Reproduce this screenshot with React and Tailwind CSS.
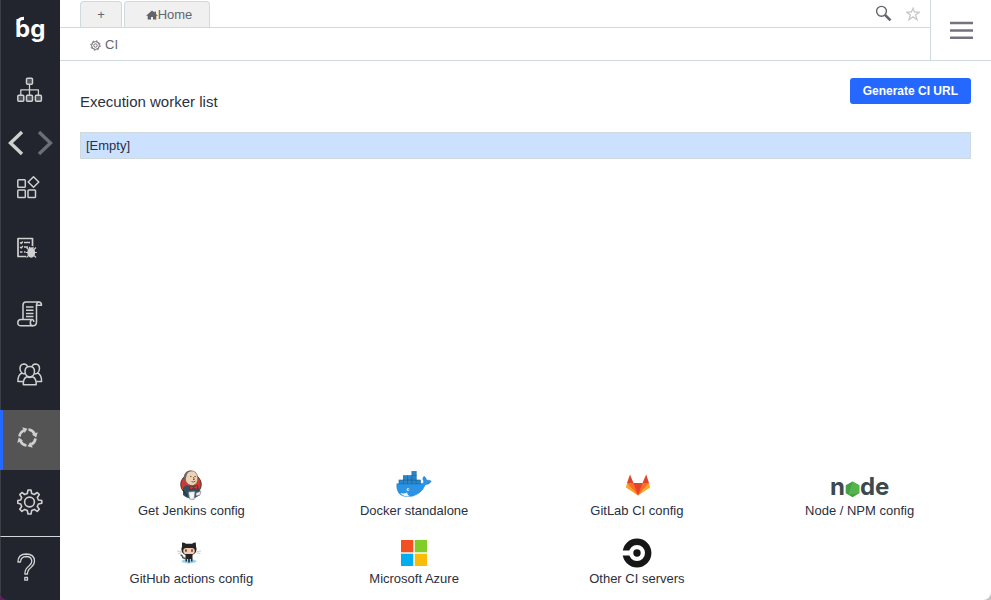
import React from "react";

const stroke = { fill: "none", stroke: "#d0d0d0", strokeWidth: 1.5, strokeLinejoin: "round" };

function Logo() {
  return (
    <span className="relative block text-[24px] leading-9 font-bold text-white font-['Inter',sans-serif]">
      bg
      <svg className="absolute top-1 left-0" width="10" height="10" viewBox="0 0 10 10" aria-hidden="true">
        <path d="M3.200 9.500Q2.500 3.500 9 3.300" fill="none" stroke="#fff" strokeWidth="3.200" />
      </svg>
    </span>
  );
}

function TreeIcon() {
  return (
    <svg width="26" height="26" viewBox="0 0 26 26" {...stroke}>
      <g fill="#50535a">
        <rect x="9.500" y="1.200" width="6" height="6" rx="1" />
        <rect x="0.800" y="18.200" width="6" height="6" rx="1" />
        <rect x="9.500" y="18.200" width="6" height="6" rx="1" />
        <rect x="18.400" y="18.200" width="6" height="6" rx="1" />
      </g>
      <path d="M12.500 7.200V18M3.800 18V12.800H21.400V18" strokeWidth="1.300" />
    </svg>
  );
}

function BlocksIcon() {
  return (
    <svg width="24" height="24" viewBox="0 0 24 24" {...stroke}>
      <rect x="0.800" y="3.700" width="7.500" height="7.500" rx="0.800" />
      <rect x="0.800" y="14" width="7.500" height="7.500" rx="0.800" />
      <rect x="11" y="14" width="7.500" height="7.500" rx="0.800" />
      <path d="M16.500 0.800L21.800 6L16.500 11.200L11.200 6Z" />
    </svg>
  );
}

function BugListIcon() {
  return (
    <svg width="22" height="22" viewBox="0 0 22 22" {...stroke}>
      <path d="M9 19.500H1V1.500H15.500V9" strokeWidth="1.700" />
      <path d="M3 5.500L4.200 6.500L5.800 4.500M3 10L4.200 11L5.800 9M3 15H5.500M7 5.500H13M7 10H11M7 15H8.500" strokeWidth="1.300" />
      <ellipse cx="14.200" cy="15.500" rx="3.200" ry="4.500" fill="#d0d0d0" />
      <path d="M9.500 10.500L11.500 12.500M19 10.500L17 12.500M8.800 15.500H19.800M9.500 20.500L11.500 18.500M19 20.500L17 18.500M12 9.800L13 11M16.500 9.800L15.500 11" strokeWidth="1.100" />
    </svg>
  );
}

function ScrollIcon() {
  return (
    <svg width="26" height="26" viewBox="0 0 26 26" {...stroke}>
      <path d="M6 18.500V4Q6 0.900 9 0.900H21.800Q24.500 0.900 24.500 4.300H19.500V21Q19.500 24.800 15.800 24.800H4Q0.800 24.800 0.800 21.700Q0.800 18.500 4 18.500H14.800" />
      <path d="M21.800 0.900Q19.500 1.200 19.500 4.300M16 18.500Q13.300 18.500 13.300 21.700Q13.300 24.800 16 24.800M15.500 18.500Q17 19 16.800 21" />
      <path d="M9 6H16.500M9 9.200H16.500M9 12.400H16.500M9 15.600H16.500" />
    </svg>
  );
}

function UsersIcon() {
  return (
    <svg width="26" height="24" viewBox="0 0 26 24" {...stroke}>
      <path d="M8 8.500Q8 3.500 12.700 3.500Q17.500 3.500 17.500 8.500Q17.200 13.500 12.700 14Q8.300 13.500 8 8.500Z" />
      <path d="M6.300 21.800Q6 15 10 13.700Q12.700 15.300 15.500 13.700Q19.500 15 19.200 21.800Z" />
      <path d="M10.500 3.500Q9.500 1 7 1Q3 1.300 3 5.500Q3 8.500 5 10Q0.900 11.500 0.900 18.500H6M15 3.500Q16 1 18.500 1Q22.500 1.300 22.500 5.500Q22.500 8.500 20.500 10Q24.600 11.500 24.600 18.500H19.500M5 10Q6.500 11.300 8.300 10.500M20.500 10Q19 11.300 17.200 10.500" />
    </svg>
  );
}

function SyncIcon() {
  return (
    <svg width="22" height="22" viewBox="0 0 22 22" fill="none" stroke="#d0d0d0" strokeWidth="2.600">
      {[0, 90, 180, 270].map((angle) => (
        <g key={angle} transform={`rotate(${angle} 10.500 10.500)`}>
          <path d="M2.500 9.500A8 8 0 0 1 6.800 3.400" />
          <path d="M5.300 0.300L10.500 1.800L7.600 6Z" fill="#d0d0d0" stroke="none" />
        </g>
      ))}
    </svg>
  );
}

function GearIcon() {
  return (
    <svg width="26" height="26" viewBox="0 0 26 26" fill="none" stroke="#d0d0d0" strokeWidth="1.600" strokeLinejoin="round">
      <path d="M10.300 4.500L11 1H14L14.700 4.500L17.300 5.500L20.200 3.500L22.300 5.600L20.300 8.500L21.400 11L24.800 11.500V14.300L21.400 15L20.300 17.500L22.300 20.300L20.200 22.400L17.300 20.400L14.700 21.500L14 25H11L10.300 21.500L7.700 20.400L4.900 22.400L2.800 20.300L4.700 17.500L3.700 15L0.800 14.300V11.500L3.700 11L4.700 8.500L2.800 5.600L4.900 3.500L7.700 5.500Z" />
      <circle cx="12.500" cy="13" r="4.900" />
    </svg>
  );
}

function HelpIcon() {
  return (
    <svg width="20" height="29" viewBox="0 0 20 29" {...stroke} strokeWidth="1.300">
      <path d="M0.900 9Q1 1 9.200 1Q17.500 1.200 17.500 8Q17.500 11.500 14 14.500Q10.500 17 10.500 21H7.800Q7.800 16 12 13Q14.800 11 14.800 8Q14.500 3.600 9.200 3.500Q3.800 3.700 3.500 9Z" />
      <rect x="7.800" y="24.500" width="2.700" height="2.700" />
    </svg>
  );
}

function JenkinsLogo() {
  return (
    <svg width="24" height="30" viewBox="0 0 24 30">
      <circle cx="12" cy="14.500" r="10.300" fill="#d33833" stroke="#493728" />
      <path d="M4 18Q6 14 11 16L17 15Q22 18 21 25L15 28.500Q8 29 4 25Z" fill="#335061" />
      <path d="M6 10Q4 2 11 1Q18 0 18.800 8Q19 14 14 15.500Q9 16 6 10Z" fill="#eed2b5" stroke="#6d5b4c" strokeWidth="0.700" />
      <path d="M6 12Q3.500 8 6 3.500Q8 0 13 0.700Q8 1.500 7.500 6L6.800 8.500L7 12Z" fill="#6f675e" />
      <path d="M11 6.500H12.500M15.500 6.500H17M12.500 11.500Q14.500 12.800 16.500 11M14.500 7L15.300 9.500H14" stroke="#51443a" strokeWidth="0.800" fill="none" />
      <path d="M11 15.500L14.500 17.200L18.500 15V19.500L14.500 18L11 20Z" fill="#d33833" stroke="#721a18" strokeWidth="0.500" />
      <path d="M9.500 22L16 21.500L15 29.500L10.500 29Z" fill="#f6f6f6" stroke="#77858c" strokeWidth="0.700" />
      <path d="M17 23L22 21L21 25L17 26Z" fill="#eee" stroke="#766" strokeWidth="0.500" />
      <path d="M4 20L8 26" stroke="#172f3c" />
    </svg>
  );
}

function DockerLogo() {
  return (
    <svg width="36" height="28" viewBox="0 0 36 28">
      <path d="M0.800 12.800H24.500Q28 12.800 27.800 10.500Q25.800 7.500 28 5.300Q30.500 7 30.500 9.300Q33 8.800 35.200 10Q33.800 13.500 29.500 13.500Q24.500 25.300 11.500 25.700Q0 25.300 0.800 12.800Z" fill="#2b93e5" stroke="#2580bb" strokeWidth="0.600" />
      <g fill="#2a85c9" stroke="#17659a" strokeWidth="0.600">
        <rect x="3" y="9" width="4.300" height="3.800" />
        <rect x="7.300" y="9" width="4.300" height="3.800" />
        <rect x="11.600" y="9" width="4.300" height="3.800" />
        <rect x="15.900" y="9" width="4.300" height="3.800" />
        <rect x="20.200" y="9" width="4.300" height="3.800" />
        <rect x="7.300" y="4.700" width="4.300" height="4.300" />
        <rect x="11.600" y="4.700" width="4.300" height="4.300" />
        <rect x="15.900" y="4.700" width="4.300" height="4.300" />
        <rect x="15.900" y="0.500" width="4.300" height="4.200" />
      </g>
      <path d="M4.200 22Q8 23 11 21.500Q11.500 24.500 14 25.200Q7.500 26.500 4.200 22Z" fill="#e8f4fb" />
      <circle cx="12" cy="18.600" r="1.300" fill="#fff" />
      <circle cx="12.200" cy="18.600" r="0.600" fill="#17659a" />
    </svg>
  );
}

function GitLabLogo() {
  return (
    <svg width="26" height="22" viewBox="-1.500 0 26 22">
      <path d="M12.500 21.500L1.500 9L4.500 0.500L8 9H17L20.700 0.500L23.500 9Z" fill="#e24329" />
      <path d="M12.500 21.500L8 9H1.500Z" fill="#fc6d26" />
      <path d="M12.500 21.500L17 9H23.500Z" fill="#fc6d26" />
      <path d="M1.500 9L0.500 13.500L12.500 21.500Z" fill="#fca326" />
      <path d="M23.500 9L24.500 13.500L12.500 21.500Z" fill="#fca326" />
    </svg>
  );
}

function NodeLogo() {
  return (
    <span className="flex items-center pt-1 text-[24px] leading-[30px] font-bold text-[#3b4a50] font-['Inter',sans-serif]">
      n
      <svg width="15" height="17" viewBox="0 0 15 17" className="mt-1" aria-hidden="true">
        <path d="M7.500 0.500L14.300 4.300V12.200L7.500 16.200L0.700 12.200V4.300Z" fill="#43a047" />
        <path d="M7.500 0.500L14.300 4.300V12.200L3.500 13.800Z" fill="#55b54a" />
      </svg>
      de
    </span>
  );
}

function OctocatLogo() {
  return (
    <svg width="28" height="22" viewBox="0.500 0 28 22">
      <ellipse cx="12.500" cy="19.300" rx="7.500" ry="2.200" fill="#9ed5ef" />
      <path d="M9 12H16V19.500H14.500V17H13.300V20.500H11.700V17H10.500V19.500H9Z" fill="#242424" />
      <path d="M10 16Q6.500 17 6 14.500Q5.500 13 4 13" fill="none" stroke="#46565b" strokeWidth="1.500" />
      <path d="M5.500 4.500V0.500Q8 0.500 9.500 1.700H15.500Q17 0.500 19.300 0.500L19.500 4.500Q21 7 19.300 10.300Q17.500 13.200 12.500 13.200Q7.300 13.200 5.500 10.300Q4 7 5.500 4.500Z" fill="#242424" />
      <rect x="6.800" y="6" width="11.400" height="6" rx="2.800" fill="#f4cbb2" />
      <ellipse cx="9.500" cy="8.600" rx="1" ry="1.500" fill="#8a4c3c" />
      <ellipse cx="15.500" cy="8.600" rx="1" ry="1.500" fill="#8a4c3c" />
      <path d="M0.500 9L5 9.500M1.500 11.500L5 10.700M20 9.500L24.500 9M20 10.700L24 11.500" stroke="#b0b6b9" strokeWidth="0.700" />
    </svg>
  );
}

function MicrosoftLogo() {
  return (
    <svg width="26" height="26" viewBox="0 0 26 26">
      <path d="M0 0H12.300V12.300H0Z" fill="#f25022" />
      <path d="M13.700 0H26V12.300H13.700Z" fill="#80cc28" />
      <path d="M0 13.700H12.300V26H0Z" fill="#00adef" />
      <path d="M13.700 13.700H26V26H13.700Z" fill="#fbbc09" />
    </svg>
  );
}

function CircleCiLogo() {
  return (
    <svg width="30" height="30" viewBox="0 0 30 30">
      <circle cx="15" cy="15" r="11.200" fill="none" stroke="#161616" strokeWidth="6.400" />
      <rect y="12.500" width="9" height="5" fill="#fff" />
      <circle cx="15" cy="15" r="3.700" fill="#161616" />
    </svg>
  );
}

const navItems = [
  { label: "Structure", Icon: TreeIcon, style: "h-[60px]" },
  { label: "Modules", Icon: BlocksIcon, style: "h-11" },
  { label: "Test runs", Icon: BugListIcon, style: "h-[76px]" },
  { label: "Scripts", Icon: ScrollIcon, style: "h-14" },
  { label: "Users", Icon: UsersIcon, style: "h-[68px] pb-0.5" },
  { label: "CI", Icon: SyncIcon, style: "h-[60px] bg-[#545454] border-l-[3px] border-l-[#2468ff] pb-1" },
  { label: "Settings", Icon: GearIcon, style: "h-[66px] pb-0.5" },
  { label: "Help", Icon: HelpIcon, style: "h-16 border-t border-t-[#d0dada] pb-0.5" },
];

const integrations = [
  { label: "Get Jenkins config", Logo: JenkinsLogo },
  { label: "Docker standalone", Logo: DockerLogo },
  { label: "GitLab CI config", Logo: GitLabLogo },
  { label: "Node / NPM config", Logo: NodeLogo },
  { label: "GitHub actions config", Logo: OctocatLogo },
  { label: "Microsoft Azure", Logo: MicrosoftLogo },
  { label: "Other CI servers", Logo: CircleCiLogo },
];

function NavButton({ item }) {
  const border = item.style.includes("border-l-[3px]") ? "pl-[14px]" : "pl-4 border-l border-l-[#3b3e47]";
  return (
    <button aria-label={item.label} className={`flex w-full shrink-0 items-center ${border} ${item.style}`}>
      <item.Icon />
    </button>
  );
}

function Sidebar() {
  return (
    <div className="flex w-[60px] shrink-0 bg-[#5b2459]">
      <nav className="flex w-full flex-col overflow-hidden rounded-bl-lg bg-[#22252e]">
        <a href="#home" className="flex h-[60px] shrink-0 items-center border-l border-l-[#3b3e47] pb-0.5 pl-3.5">
          <Logo />
        </a>
        <NavButton item={navItems[0]} />
        <div className="flex h-[46px] shrink-0 items-center justify-between border-l border-l-[#3b3e47] pr-1.5 pl-1.5">
          <button aria-label="Back">
            <svg width="17" height="26" viewBox="0 0 17 26" fill="none" stroke="#d0d0d0" strokeWidth="3.400"><path d="M15 2L3.500 13L15 24" /></svg>
          </button>
          <button aria-label="Forward">
            <svg width="17" height="26" viewBox="0 0 17 26" fill="none" stroke="#6c6e74" strokeWidth="3.400"><path d="M2 2L13.500 13L2 24" /></svg>
          </button>
        </div>
        {navItems.slice(1).map((item) => <NavButton key={item.label} item={item} />)}
      </nav>
    </div>
  );
}

function Header() {
  return (
    <header className="flex h-[61px] shrink-0 border-b border-[#d0d9db] text-[#65656b]">
      <div className="flex min-w-0 flex-1 flex-col">
        <div className="flex h-7 items-end border-b border-[#d0d9db] pl-5">
          <button aria-label="New tab" className="h-[26px] w-[42px] rounded-t border border-b-0 border-[#d0d9db] bg-[#f0f0f0] pt-px text-[13px]">+</button>
          <button className="ml-0.5 flex h-[26px] w-[86px] items-center justify-center rounded-t border border-b-0 border-[#d0d9db] bg-[#f0f0f0] pl-1 text-[13px]">
            <svg width="12" height="10" viewBox="0 0 12 10" fill="#62626b"><path d="M6 0.500L8.500 2.500V1.500H10V4L12 5.800H10.300V9.500H7V7H5V9.500H1.700V5.800H0Z" /></svg>
            Home
          </button>
          <div className="mr-2.5 ml-auto flex h-[27px] items-center gap-3.5">
            <button aria-label="Search">
              <svg width="17" height="17" viewBox="0 0 17 17" fill="none" stroke="#62626b"><circle cx="6.500" cy="6.300" r="4.900" strokeWidth="1.400" /><path d="M10 9.800L15.500 15.300" strokeWidth="2.600" /></svg>
            </button>
            <button aria-label="Favourite">
              <svg width="14" height="14" viewBox="0 0 14 14" fill="none" stroke="#c8c8cb" strokeWidth="1.300"><path d="M7 1.300L8.600 5.200H13.200L9.600 8L11 12.700L7 9.900L3 12.700L4.400 8L0.800 5.200H5.400Z" /></svg>
            </button>
          </div>
        </div>
        <div className="flex flex-1 items-center gap-1 pt-0.5 pl-[30px] text-[13px] leading-4">
          <svg width="11" height="11" viewBox="0 0 11 11" fill="none" stroke="#62626b"><circle cx="5.500" cy="5.500" r="3.900" /><circle cx="5.500" cy="5.500" r="4.700" strokeWidth="1" strokeDasharray="1.500 2.190" /><circle cx="5.500" cy="5.500" r="1.700" strokeWidth="0.900" /></svg>
          <span>CI</span>
        </div>
      </div>
      <button aria-label="Menu" className="flex w-[61px] items-center justify-center border-l border-[#d0d9db]">
        <svg width="23" height="18" viewBox="0 0 23 18" fill="none" stroke="#73737f" strokeWidth="2.600"><path d="M0 2H23M0 9.500H23M0 16.700H23" /></svg>
      </button>
    </header>
  );
}

export default function App() {
  return (
    <div className="flex min-h-screen bg-[#c5c5c8] font-['Liberation_Sans',Arial,sans-serif] text-[#2b3040]">
      <Sidebar />
      <div className="flex min-w-0 flex-1 flex-col rounded-br-lg bg-white">
        <Header />
        <main className="flex flex-1 flex-col px-5 pt-[17px] pb-[11px]">
          <div className="flex items-start justify-between">
            <h1 className="pt-3.5 text-[15px] leading-5">Execution worker list</h1>
            <button className="h-[26px] rounded-[3px] bg-[#2468ff] px-[13px] text-[12px] font-bold text-white">Generate CI URL</button>
          </div>
          <table className="mt-5 w-full border border-[#d0d9db] bg-[#cce0ff] text-left text-[13px]">
            <tbody>
              <tr>
                <td className="h-[26px] px-[5px] leading-4">[Empty]</td>
              </tr>
            </tbody>
          </table>
          <div className="mt-auto grid grid-cols-4 gap-y-4 text-[13px] leading-5">
            {integrations.map(({ label, Logo: Mark }) => (
              <button key={label} className="flex flex-col items-center">
                <span className="flex h-8 items-center"><Mark /></span>
                <span>{label}</span>
              </button>
            ))}
          </div>
        </main>
      </div>
    </div>
  );
}
